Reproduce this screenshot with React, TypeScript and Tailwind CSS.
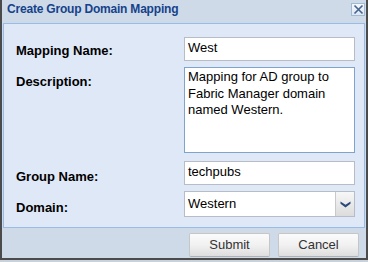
import React from "react";

function Row({
  label,
  labelPad,
  children,
}: {
  label: string;
  labelPad: string;
  children: React.ReactNode;
}) {
  return (
    <div className="flex items-start">
      <div className={`w-[180px] pl-[12px] font-bold text-[13px] leading-[16px] text-black ${labelPad}`}>
        {label}
      </div>
      {children}
    </div>
  );
}

export default function App() {
  return (
    <div
      className="w-[368px] h-[262px] bg-[#c9d1da]"
      style={{ fontFamily: '"Liberation Sans", Arial, sans-serif' }}
    >
      <div className="w-[368px] h-[260px] flex flex-col bg-[#cedae7] border-l-2 border-r-2 border-b-2 border-[#4b4b4b] px-[1px]">
        {/* header */}
        <div className="h-[23px] flex items-start justify-between shrink-0">
          <div className="pl-[4px] pt-[1px] text-[12px] leading-[16px] font-bold text-[#15428b] tracking-[-0.2px]">
            Create Group Domain Mapping
          </div>
          <div className="mt-[3px] w-[14px] h-[13px] border border-[#a3bad5] bg-gradient-to-b from-[#f4f8fc] to-[#dde7f2] flex items-center justify-center">
            <svg width="11" height="11" viewBox="0 0 11 11">
              <path d="M1.5 1.5 L9.5 9.5 M9.5 1.5 L1.5 9.5" stroke="#48658f" strokeWidth="1.7" fill="none" />
            </svg>
          </div>
        </div>

        {/* form panel */}
        <div className="h-[205px] shrink-0 border border-[#99bbe8] bg-[#dfe8f6] pt-[13px] flex flex-col">
          <Row label="Mapping Name:" labelPad="pt-[6px]">
            <div className="w-[171px] h-[24px] border border-[#b8bcc6] bg-white px-[3px] pt-[2px] text-[13px] leading-[16px] text-black">
              West
            </div>
          </Row>
          <div className="h-[6px]" />
          <Row label="Description:" labelPad="pt-[7px]">
            <div className="w-[171px] h-[86px] border border-[#7ea3cc] bg-white px-[3px] pt-[1px] text-[13px] leading-[16.7px] text-black">
              Mapping for AD group to Fabric Manager domain named Western.
            </div>
          </Row>
          <div className="h-[8px]" />
          <Row label="Group Name:" labelPad="pt-[8px]">
            <div className="w-[171px] h-[24px] border border-[#b8bcc6] bg-white px-[3px] pt-[2px] text-[13px] leading-[16px] text-black">
              techpubs
            </div>
          </Row>
          <div className="h-[6px]" />
          <Row label="Domain:" labelPad="pt-[9px]">
            <div className="w-[171px] h-[26px] border border-[#b8bcc6] bg-white flex">
              <div className="flex-1 px-[3px] pt-[4px] text-[13px] leading-[16px] text-black">Western</div>
              <div className="w-[19px] border-l border-[#c9c9c9] bg-gradient-to-b from-[#f7f7f7] to-[#dcdcdc] flex items-center justify-center">
                <svg width="11" height="7" viewBox="0 0 11 7">
                  <path d="M0.5 0.5 L5.5 3.8 L10.5 0.5 L10.5 2.8 L5.5 6.5 L0.5 2.8 Z" fill="#2a4a7c" />
                </svg>
              </div>
            </div>
          </Row>
        </div>

        {/* footer */}
        <div className="flex-1 flex justify-end items-start gap-[8px] pt-[5px] pr-[6px]">
          <button className="w-[81px] h-[24px] rounded-[2px] border border-[#c6c6c6] border-b-[#b0b0b0] bg-gradient-to-b from-[#fbfbfb] via-[#f1f1f1] to-[#dedede] text-[13px] leading-[16px] text-[#333]">
            Submit
          </button>
          <button className="w-[81px] h-[24px] rounded-[2px] border border-[#c6c6c6] border-b-[#b0b0b0] bg-gradient-to-b from-[#fbfbfb] via-[#f1f1f1] to-[#dedede] text-[13px] leading-[16px] text-[#333]">
            Cancel
          </button>
        </div>
      </div>
    </div>
  );
}
